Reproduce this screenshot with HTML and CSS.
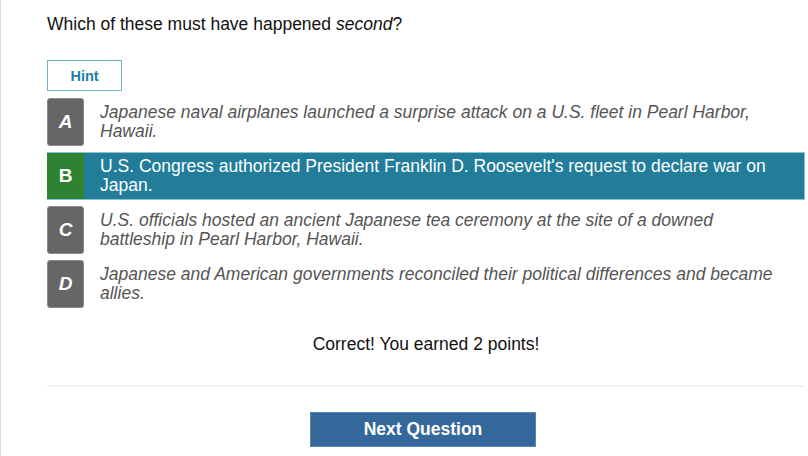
FILE: index.html
```html
<!DOCTYPE html>
<html>
<head>
<meta charset="utf-8">
<link rel="stylesheet" href="styles.css">
</head>
<body>
<div class="page">
  <p class="question">Which of these must have happened <em>second</em>?</p>
  <button class="hint">Hint</button>
  <div class="options">
    <div class="option">
      <div class="letter">A</div>
      <div class="text">Japanese naval airplanes launched a surprise attack on a U.S. fleet in Pearl Harbor, Hawaii.</div>
    </div>
    <div class="option selected">
      <div class="letter">B</div>
      <div class="text">U.S. Congress authorized President Franklin D. Roosevelt's request to declare war on Japan.</div>
    </div>
    <div class="option">
      <div class="letter">C</div>
      <div class="text">U.S. officials hosted an ancient Japanese tea ceremony at the site of a downed battleship in Pearl Harbor, Hawaii.</div>
    </div>
    <div class="option">
      <div class="letter">D</div>
      <div class="text">Japanese and American governments reconciled their political differences and became allies.</div>
    </div>
  </div>
  <p class="result">Correct! You earned 2 points!</p>
  <hr class="divider">
  <div class="actions">
    <button class="next">Next Question</button>
  </div>
</div>
</body>
</html>
```
FILE: styles.css
```css
html, body {
  margin: 0;
  padding: 0;
  background: #fff;
}
body {
  font-family: "Liberation Sans", Arial, sans-serif;
  color: #111;
}
.page {
  border-left: 1px solid #dcdcdc;
  min-height: 456px;
  box-sizing: border-box;
  padding: 14px 3px 0 46px;
  width: 808px;
}
.question {
  margin: 0;
  font-size: 17.5px;
  line-height: 20px;
  color: #111;
}
.hint {
  display: block;
  margin-top: 26px;
  width: 75px;
  height: 31px;
  background: #fff;
  border: 1px solid #6fb3cb;
  color: #1b7fa6;
  font-family: "Liberation Sans", Arial, sans-serif;
  font-weight: bold;
  font-size: 14.5px;
  padding: 0;
}
.options {
  margin-top: 7px;
  display: flex;
  flex-direction: column;
  gap: 6px;
  width: 758px;
}
.option {
  display: flex;
  align-items: center;
  height: 48px;
  box-sizing: border-box;
}
.letter {
  width: 37px;
  height: 48px;
  flex: none;
  box-sizing: border-box;
  background: #666;
  border: 1px solid #8a8a8a;
  border-radius: 3px;
  color: #fff;
  font-weight: bold;
  font-style: italic;
  font-size: 19px;
  display: flex;
  align-items: center;
  justify-content: center;
}
.text {
  padding-left: 16px;
  font-size: 17.5px;
  line-height: 19px;
  font-style: italic;
  color: #555;
  padding-right: 24px;
}
.option.selected {
  background: #217d99;
  border: 1px solid #8cc2d2;
  border-left: none;
}
.option.selected .letter {
  background: #2f8232;
  border: none;
  border-radius: 0;
  height: 46px;
  font-style: normal;
}
.option.selected .text {
  color: #fff;
  font-style: normal;
}
.result {
  margin: 26px 0 0;
  text-align: center;
  font-size: 17.5px;
  line-height: 20px;
  color: #111;
  width: 758px;
}
.divider {
  margin: 31px 0 0;
  border: none;
  height: 2px;
  background: #f0f0f0;
  width: 758px;
}
.actions {
  display: flex;
  justify-content: center;
  width: 758px;
  padding-right: 6px;
  box-sizing: border-box;
  margin-top: 25px;
}
.next {
  width: 226px;
  height: 35px;
  background: #35689a;
  border: 1px solid #5a86b0;
  color: #fff;
  font-family: "Liberation Sans", Arial, sans-serif;
  font-weight: bold;
  font-size: 17.5px;
  padding: 0;
}
```
